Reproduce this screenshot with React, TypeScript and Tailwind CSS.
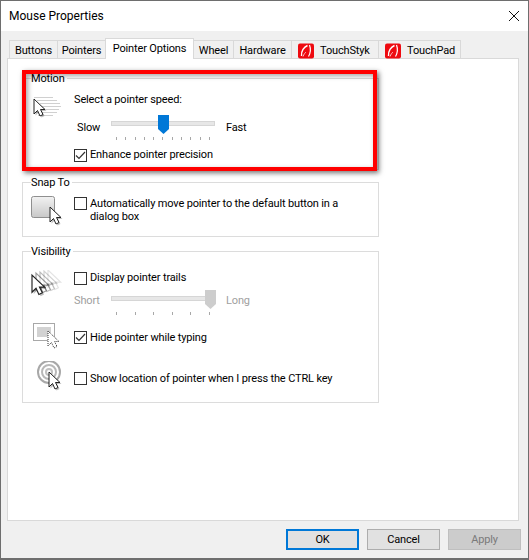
import React from 'react';

const tabs = [
  { label: 'Buttons', width: 'w-[49px]' },
  { label: 'Pointers', width: 'w-[49px]' },
  { label: 'Pointer Options', width: 'w-[89px]', active: true },
  { label: 'Wheel', width: 'w-[41px]' },
  { label: 'Hardware', width: 'w-[59px]' },
  { label: 'TouchStyk', width: 'w-[88px]', logo: true },
  { label: 'TouchPad', width: 'w-[83px]', logo: true },
];

const CursorArrow: React.FC<{ x: number; y: number; scale?: number; dotted?: boolean; opacity?: number; shadow?: boolean }> = ({ x, y, scale = 1, dotted, opacity = 1, shadow = true }) => {
  const d = 'M0 0 L0 15 L3.5 11.5 L6 17 L9 15.5 L6.5 10.5 L11 10.5 Z';
  return (
    <g transform={`translate(${x} ${y}) scale(${scale})`} opacity={opacity}>
      {shadow && <path d={d} transform="translate(1.5 1.5)" fill="#000" opacity={0.25} />}
      <path d={d} fill="#fff" stroke={dotted ? '#333' : '#222'} strokeWidth={1} strokeDasharray={dotted ? '1 1' : undefined} />
    </g>
  );
};

const LogoIcon = () => (
  <svg width="16" height="16" viewBox="0 0 16 16" className="shrink-0">
    <rect x="0" y="0.5" width="16" height="15" rx="2" fill="#ee0a10" />
    <path d="M9.5 2.5 C6 4 3 8 3.5 13" fill="none" stroke="#fff" strokeWidth="1.4" />
    <path d="M11.5 2 C13 6 12.5 10 10.5 13.5" fill="none" stroke="#fff" strokeWidth="1.2" />
    <path d="M5 13.5 C6 11 7 10 8 9" fill="none" stroke="#f8c0c0" strokeWidth="1" />
  </svg>
);

const Checkbox: React.FC<{ checked?: boolean }> = ({ checked }) => (
  <span className="w-[13px] h-[13px] border border-[#333333] bg-white shrink-0 flex items-center justify-center">
    {checked && (
      <svg width="11" height="11" viewBox="0 0 11 11">
        <path d="M1 5.5 L4 8.5 L10 2" fill="none" stroke="#333" strokeWidth="1.2" />
      </svg>
    )}
  </span>
);

const Slider: React.FC<{ ticks: number; thumbLeft: string; disabled?: boolean }> = ({ ticks, thumbLeft, disabled }) => (
  <div className="relative w-[104px] h-[25px]">
    <div className="absolute left-0 right-0 top-[6px] h-[5px] bg-[#e7e7e7] border border-[#d6d6d6]" />
    <svg width="11" height="20" viewBox="0 0 11 20" className={`absolute top-0 ${thumbLeft}`}>
      <path d="M0 0 H11 V14 L5.5 19 L0 14 Z" fill={disabled ? '#cdcdcd' : '#0078d7'} />
    </svg>
    <div className="absolute left-[5px] right-[5px] bottom-0 h-[3px] flex justify-between">
      {Array.from({ length: ticks }).map((_, i) => (
        <span key={i} className="w-px h-[3px] bg-[#a8a8a8]" />
      ))}
    </div>
  </div>
);

const GroupBox: React.FC<{ title: string; className: string; children: React.ReactNode }> = ({ title, className, children }) => (
  <div className={`relative w-[357px] border border-[#dcdcdc] ${className}`}>
    <span className="absolute -top-[8px] left-[8px] bg-white pr-[2px] leading-[16px]">{title}</span>
    {children}
  </div>
);

const App: React.FC = () => {
  return (
    <div className="relative w-[529px] h-[560px] overflow-hidden flex flex-col bg-[#f0f0f0] border border-[#6e6e6e] border-b-[2px] text-[11px] tracking-[-0.15px] leading-[16px] text-black font-['Roboto',sans-serif]">
      {/* Title bar */}
      <div className="h-[30px] bg-white flex items-center justify-between shrink-0 pl-[8px] pr-[7px]">
        <span className="text-[12px] tracking-[0px]">Mouse Properties</span>
        <svg width="12" height="12" viewBox="0 0 12 12" className="mr-[1px]">
          <path d="M1 1 L11 11 M11 1 L1 11" stroke="#111" strokeWidth="1" />
        </svg>
      </div>

      {/* Tabs */}
      <div className="flex items-end h-[28px] pl-[8px] shrink-0 relative z-10">
        {tabs.map(t => (
          <div
            key={t.label}
            className={`${t.width} flex items-center gap-[6px] whitespace-nowrap border border-[#d9d9d9] -ml-px first:ml-0 ${
              t.logo ? 'justify-start pl-[6px]' : 'justify-center'
            } ${t.active ? 'h-[21px] bg-white border-b-0 relative z-10' : 'h-[19px] bg-[#f0f0f0] pt-[2px]'}`}
          >
            {t.logo && <LogoIcon />}
            <span>{t.label}</span>
          </div>
        ))}
      </div>

      {/* Panel */}
      <div className="w-[512px] h-[463px] ml-[6px] -mt-px bg-white border border-[#d9d9d9] pl-[14px] pt-[19px] shrink-0">
        <GroupBox title="Motion" className="h-[92px]">
          <div className="flex">
            <div className="w-[51px] shrink-0">
              <svg width="45" height="40" viewBox="0 0 45 40">
                <g stroke="#d0d0d0" strokeWidth="1">
                  <path d="M11 18.5 H30 M14 21.5 H34 M17 24.5 H37 M19 27.5 H38 M17 30.5 H36 M13 33.5 H34 M15 36.5 H30" />
                </g>
                <CursorArrow x={11} y={20} />
              </svg>
            </div>
            <div className="pt-[13px] flex flex-col">
              <span className="h-[16px]">Select a pointer speed:</span>
              <div className="flex items-start mt-[7px] h-[25px]">
                <span className="w-[37px] pl-[3px] pt-[5px]">Slow</span>
                <Slider ticks={11} thumbLeft="left-[47px]" />
                <span className="ml-[11px] pt-[5px]">Fast</span>
              </div>
              <div className="flex items-center gap-[3px] mt-[7px]">
                <Checkbox checked />
                <span>Enhance pointer precision</span>
              </div>
            </div>
          </div>
        </GroupBox>

        <GroupBox title="Snap To" className="h-[55px] mt-[12px]">
          <div className="flex">
            <div className="w-[51px] shrink-0">
              <svg width="48" height="46" viewBox="0 0 48 46">
                <defs>
                  <linearGradient id="snapBtn" x1="0" y1="0" x2="0" y2="1">
                    <stop offset="0" stopColor="#f2f2f2" />
                    <stop offset="1" stopColor="#c8c8c8" />
                  </linearGradient>
                </defs>
                <rect x="8.5" y="13.5" width="23" height="21" rx="2" fill="url(#snapBtn)" stroke="#8f8f8f" />
                <CursorArrow x={27} y={24} />
              </svg>
            </div>
            <div className="pt-[14px] flex gap-[3px] w-[275px]">
              <Checkbox />
              <span className="leading-[13px]">Automatically move pointer to the default button in a dialog box</span>
            </div>
          </div>
        </GroupBox>

        <GroupBox title="Visibility" className="h-[152px] mt-[14px]">
          <div className="flex pt-[18px]">
            <div className="w-[51px] shrink-0 h-[26px]">
              <svg width="48" height="30" viewBox="0 0 48 30">
                <CursorArrow x={25} y={0} scale={1.15} opacity={0.12} shadow={false} />
                <CursorArrow x={21} y={1} scale={1.15} opacity={0.2} shadow={false} />
                <CursorArrow x={17} y={2} scale={1.15} opacity={0.3} shadow={false} />
                <CursorArrow x={13} y={3} scale={1.15} opacity={0.45} shadow={false} />
                <CursorArrow x={9} y={5} scale={1.15} />
              </svg>
            </div>
            <div className="flex flex-col">
              <div className="flex items-center gap-[3px]">
                <Checkbox />
                <span>Display pointer trails</span>
              </div>
              <div className="flex items-start mt-[4px] h-[25px] text-[#a0a0a0]">
                <span className="w-[37px] pt-[3px]">Short</span>
                <Slider ticks={6} thumbLeft="left-[94px]" disabled />
                <span className="ml-[11px] pt-[3px]">Long</span>
              </div>
            </div>
          </div>
          <div className="flex mt-[7px]">
            <div className="w-[51px] shrink-0 h-[35px]">
              <svg width="48" height="35" viewBox="0 0 48 35">
                <rect x="10.5" y="1.5" width="21" height="17" fill="#fff" stroke="#a8a8a8" />
                <rect x="14" y="5" width="14" height="10" fill="#d2d2d2" />
                <CursorArrow x={25} y={9} dotted shadow={false} />
              </svg>
            </div>
            <div className="flex items-center gap-[3px] h-[13px] mt-[9px]">
              <Checkbox checked />
              <span>Hide pointer while typing</span>
            </div>
          </div>
          <div className="flex mt-[4px]">
            <div className="w-[51px] shrink-0 h-[35px]">
              <svg width="48" height="35" viewBox="0 0 48 35">
                <circle cx="26" cy="11" r="11" fill="none" stroke="#a8a8a8" strokeWidth="2" />
                <circle cx="26" cy="11" r="7" fill="none" stroke="#b8b8b8" strokeWidth="2" />
                <circle cx="26" cy="11" r="3" fill="none" stroke="#c0c0c0" strokeWidth="2" />
                <CursorArrow x={26} y={11} />
              </svg>
            </div>
            <div className="flex items-center gap-[3px] h-[13px] mt-[11px]">
              <Checkbox />
              <span>Show location of pointer when I press the CTRL key</span>
            </div>
          </div>
        </GroupBox>
      </div>

      {/* Footer buttons */}
      <div className="flex justify-end gap-[8px] pr-[7px] pt-[8px]">
        <button className="w-[73px] h-[21px] bg-[#e1e1e1] border-2 border-[#0078d7] flex items-center justify-center">OK</button>
        <button className="w-[73px] h-[21px] bg-[#e1e1e1] border border-[#adadad] flex items-center justify-center">Cancel</button>
        <button className="w-[73px] h-[21px] bg-[#cccccc] border border-[#bfbfbf] text-[#7a7a7a] flex items-center justify-center">Apply</button>
      </div>

      {/* Red highlight drawn over the screenshot */}
      <div className="absolute left-[21px] top-[69px] w-[355px] h-[101px] border-[4px] border-[#ff0000] shadow-[2px_2px_5px_rgba(0,0,0,0.55),inset_2px_2px_5px_rgba(0,0,0,0.35)]" />
    </div>
  );
};

export default App;
